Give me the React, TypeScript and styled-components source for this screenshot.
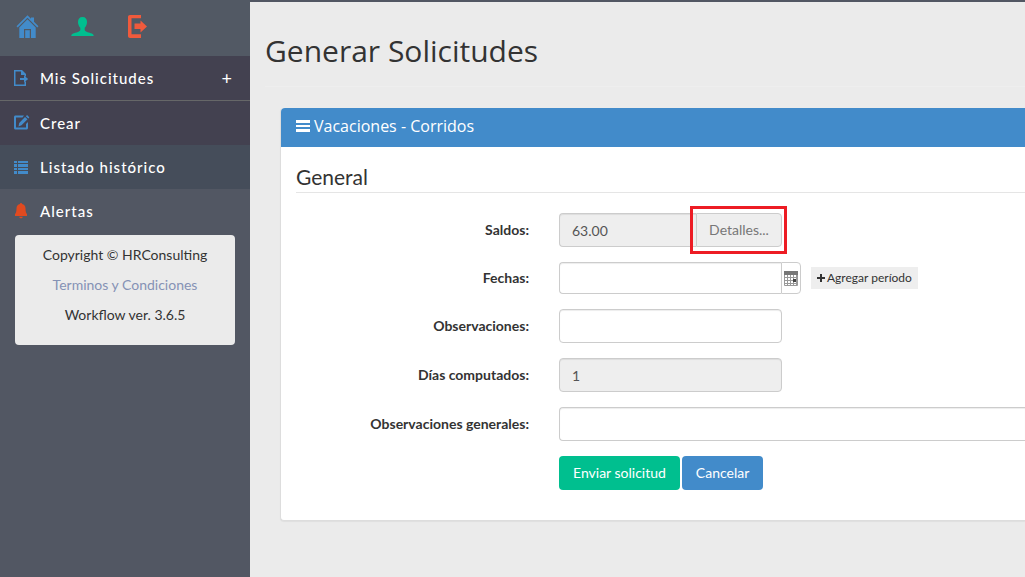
import React from "react";
import styled, { createGlobalStyle } from "styled-components";

const GlobalStyle = createGlobalStyle`
  *, *::before, *::after { box-sizing: border-box; }
  body {
    margin: 0;
    background: #ebebeb;
    color: #333;
    font: 14px/20px Lato, "Liberation Sans", sans-serif;
  }
  button, input { font: inherit; }
`;

const Page = styled.div`
  display: flex;
  min-height: 100vh;
  overflow-x: hidden;
`;

const Sidebar = styled.aside`
  flex: 0 0 250px;
  background: #525763;
`;

const Shortcuts = styled.nav`
  display: flex;
  gap: 31px;
  height: 56px;
  padding: 15px 16px;
  background: #525964;
`;

const Shortcut = styled.a<{ $color: string }>`
  width: 24px;
  height: 24px;
  color: ${(p) => p.$color};
`;

const Glyph = styled.svg`
  display: block;
  fill: currentColor;
`;

const Menu = styled.ul`
  list-style: none;
  margin: 0;
  padding: 0;
`;

const MenuItem = styled.li<{ $bg?: string; $line?: boolean }>`
  background: ${(p) => p.$bg ?? "transparent"};
  border-bottom: ${(p) => (p.$line ? "1px solid #666768" : "0")};
`;

const MenuLink = styled.a<{ $icon: string }>`
  display: flex;
  align-items: center;
  gap: 10px;
  height: 44px;
  padding: 0 17px 0 13px;
  color: #fff;
  font-size: 15px;
  font-weight: 500;
  line-height: 20px;
  letter-spacing: 1px;
  text-decoration: none;

  svg { color: ${(p) => p.$icon}; }
`;

const Expand = styled.span`
  margin-left: auto;
  font-size: 18px;
  font-weight: 400;
`;

const About = styled.section`
  height: 110px;
  margin: 2px 15px;
  padding: 5px 10px;
  border-radius: 4px;
  background: #ebebeb;
  text-align: center;
`;

const AboutLine = styled.p`
  margin: 0;
  line-height: 30px;

  a { color: #8592b5; text-decoration: none; }
`;

const Main = styled.main`
  flex: 1;
  min-width: 0;
  border-top: 2px solid #525763;
  padding-left: 15px;
`;

const Title = styled.h1`
  margin: 0 0 21px;
  padding: 28px 0 14px;
  border-bottom: 1px solid #eee;
  font: 400 30px/42px "Open Sans", "Noto Sans", sans-serif;
`;

const Panel = styled.section`
  margin-left: 15px;
  border: 1px solid #ddd;
  border-width: 0 0 1px 1px;
  border-radius: 4px 0 0 4px;
  background: #fff;
  box-shadow: 0 1px 1px rgba(0, 0, 0, 0.05);
`;

const PanelTitle = styled.h2`
  display: flex;
  align-items: center;
  gap: 4px;
  height: 39px;
  margin: 0;
  padding: 0 15px 3px;
  border-radius: 4px 0 0 0;
  background: #428bca;
  color: #fff;
  font: 500 16px/24px "Open Sans", "Noto Sans", sans-serif;
`;

const Form = styled.form`
  display: flex;
  flex-direction: column;
  gap: 15px;
  padding: 15px 0 30px 15px;
`;

const Legend = styled.h3`
  margin: 0 0 5px;
  border-bottom: 1px solid #e5e5e5;
  font-size: 21px;
  font-weight: 400;
  line-height: 30px;
`;

const Row = styled.div`
  display: grid;
  grid-template-columns: 233px minmax(0, 1fr);
  column-gap: 30px;
  align-items: center;
`;

const Label = styled.label`
  font-weight: 700;
  text-align: right;
`;

const Field = styled.div`
  display: flex;
  align-items: center;
`;

const TextInput = styled.input<{ $width?: string; $joined?: boolean; $bleed?: boolean; $short?: boolean }>`
  width: ${(p) => p.$width ?? "100%"};
  height: ${(p) => (p.$short ? "32px" : "34px")};
  padding: 6px 12px;
  border: 1px solid #ccc;
  border-right-width: ${(p) => (p.$joined || p.$bleed ? "0" : "1px")};
  border-radius: ${(p) => (p.$joined || p.$bleed ? "4px 0 0 4px" : "4px")};
  background: #fff;
  box-shadow: inset 0 1px 1px rgba(0, 0, 0, 0.075);
  color: #555;

  &:read-only { background: #eee; }
`;

const Highlight = styled.span`
  position: relative;
  display: flex;

  &::after {
    content: "";
    position: absolute;
    inset: -7px -5px -7px -6px;
    border: 3px solid #ed1c24;
    pointer-events: none;
  }
`;

const DetailsButton = styled.button`
  width: 86px;
  height: 34px;
  padding: 0;
  border: 1px solid #ccc;
  border-radius: 0 4px 4px 0;
  background: #eee;
  color: #777;
`;

const CalendarButton = styled.button`
  display: grid;
  place-items: center;
  width: 20px;
  height: 32px;
  padding: 0;
  border: 1px solid #ccc;
  border-radius: 0 4px 4px 0;
  background: #fff;
  color: #777;
`;

const AddButton = styled.button`
  display: flex;
  align-items: center;
  gap: 2px;
  height: 22px;
  margin-left: 10px;
  padding: 0 6px;
  border: 0;
  background: #eee;
  color: #333;
  font-size: 12px;
`;

const Actions = styled.div`
  display: flex;
  gap: 2px;
  padding-left: 263px;
`;

const ActionButton = styled.button<{ $color: string }>`
  height: 34px;
  padding: 0 14px;
  border: 0;
  border-radius: 4px;
  background: ${(p) => p.$color};
  color: #fff;
`;

const HomeIcon = () => (
  <Glyph width="24" height="24" viewBox="0 0 24 24" aria-hidden="true">
    <path d="M11.500.300.5 11.300l1.200 1.200 9.800-9.800 9.800 9.800 1.200-1.200L18 6.800V2.500h-3v1.300Z" />
    <path d="M11.500 4.200 3.300 12.400V23H8v-9h7v9h4.700V12.400Z" />
    <path d="M9.200 15.200h4.600V23H9.200Z" />
  </Glyph>
);

const UserIcon = () => (
  <Glyph width="24" height="24" viewBox="0 0 24 24" aria-hidden="true">
    <path d="M11.500 2C8.500 2 7 4 7 7c0 2.500 1 4.500 2.300 5.700v2.100c0 1.200-1 1.700-2.300 2.200-4 1.300-6.700 1.500-6.700 4h22.400c0-2.500-2.700-2.700-6.700-4-1.300-.5-2.300-1-2.300-2.200v-2.100C15 11.500 16 9.500 16 7c0-3-1.500-5-4.500-5Z" />
  </Glyph>
);

const ExitIcon = () => (
  <Glyph width="24" height="24" viewBox="0 0 24 24" aria-hidden="true">
    <path d="M4 0h11v3.300H5.500v16H15V23H4c-1.200 0-2-.8-2-2V2C2 .8 2.800 0 4 0Z" />
    <path d="M8.500 8.500h6V5.500l6.500 6-6.500 6v-3.500h-6Z" />
  </Glyph>
);

const FileOutIcon = () => (
  <Glyph width="17" height="18" viewBox="0 0 17 18" aria-hidden="true">
    <path d="M1 1h8l4 4v2.500h-1.500V6H8V2.500H2.500v13h9V12.500H13V17H1Z" />
    <path d="M7 9h4V6.500l4.200 3.500-4.200 3.500V11H7Z" />
  </Glyph>
);

const EditIcon = () => (
  <Glyph width="17" height="18" viewBox="0 0 17 18" aria-hidden="true">
    <path d="M2.500 1.500H11L9.500 3.500H3v10h10V10l2-2v6c0 .9-.6 1.500-1.500 1.500H2.500C1.600 15.500 1 14.900 1 14V3c0-.9.6-1.500 1.500-1.500Z" />
    <path d="m12 3 2.500 2.300-6 6L5.500 12.500l.7-3.500Zm.8-.8.8-.7c.3-.3.700-.3 1 0L16 2.900c.3.300.3.700 0 1l-.8.7Z" />
  </Glyph>
);

const ListIcon = () => (
  <Glyph width="17" height="18" viewBox="0 0 17 18" aria-hidden="true">
    <path d="M1 3h3v2H1Zm4 0h10v2H5ZM1 6h3v3H1Zm4 0h10v3H5ZM1 10h3v2H1Zm4 0h10v2H5ZM1 13h3v3H1Zm4 0h10v3H5Z" />
  </Glyph>
);

const BellIcon = () => (
  <Glyph width="17" height="18" viewBox="0 0 17 18" aria-hidden="true">
    <path d="M7 2c0-1.300 2-1.300 2 0 2.200.4 3.500 2 3.500 4.500 0 3 .6 4.500 1.500 5.500v2H2v-2c.9-1 1.500-2.500 1.500-5.500C3.500 4 4.800 2.400 7 2Zm-.7 12.700h3.400c0 2-3.400 2-3.400 0Z" />
  </Glyph>
);

const BarsIcon = () => (
  <Glyph width="14" height="14" viewBox="0 0 14 14" aria-hidden="true">
    <path d="M0 1h14v3H0Zm0 5h14v2H0Zm0 4h14v3H0Z" />
  </Glyph>
);

const CalendarIcon = () => (
  <Glyph width="14" height="15" viewBox="0 0 14 15" aria-hidden="true">
    <path d="M0 0h14v4H0Z" />
    <path
      fill="none"
      stroke="#999"
      d="M.5 4v10.500h13V4M3.500 4v11M6.500 4v11M9.500 4v11M12.500 4v11M0 6.500h14M0 9.500h14M0 12.500h14"
    />
    <path fill="#444" d="M9 8h3v3H9Z" />
  </Glyph>
);

const PlusIcon = () => (
  <Glyph width="8" height="8" viewBox="0 0 8 8" aria-hidden="true">
    <path d="M3 0h2v3h3v2H5v3H3V5H0V3h3Z" />
  </Glyph>
);

export default function App() {
  return (
    <Page>
      <GlobalStyle />
      <Sidebar>
        <Shortcuts>
          <Shortcut href="#inicio" $color="#428bca" aria-label="Inicio"><HomeIcon /></Shortcut>
          <Shortcut href="#perfil" $color="#00bf8f" aria-label="Perfil"><UserIcon /></Shortcut>
          <Shortcut href="#salir" $color="#f05a3c" aria-label="Salir"><ExitIcon /></Shortcut>
        </Shortcuts>
        <Menu>
          <MenuItem $bg="#434150" $line>
            <MenuLink href="#solicitudes" $icon="#428bca"><FileOutIcon />Mis Solicitudes<Expand>+</Expand></MenuLink>
          </MenuItem>
          <MenuItem $bg="#434150">
            <MenuLink href="#crear" $icon="#428bca"><EditIcon />Crear</MenuLink>
          </MenuItem>
          <MenuItem $bg="#454d5a">
            <MenuLink href="#listado" $icon="#428bca"><ListIcon />Listado histórico</MenuLink>
          </MenuItem>
          <MenuItem>
            <MenuLink href="#alertas" $icon="#e04a20"><BellIcon />Alertas</MenuLink>
          </MenuItem>
        </Menu>
        <About>
          <AboutLine>Copyright © HRConsulting</AboutLine>
          <AboutLine><a href="#terminos">Terminos y Condiciones</a></AboutLine>
          <AboutLine>Workflow ver. 3.6.5</AboutLine>
        </About>
      </Sidebar>
      <Main>
        <Title>Generar Solicitudes</Title>
        <Panel>
          <PanelTitle><BarsIcon />Vacaciones - Corridos</PanelTitle>
          <Form onSubmit={(e: React.FormEvent) => e.preventDefault()}>
            <Legend>General</Legend>
            <Row>
              <Label htmlFor="saldos">Saldos:</Label>
              <Field>
                <TextInput id="saldos" $width="137px" $joined readOnly defaultValue="63.00" />
                <Highlight><DetailsButton type="button">Detalles...</DetailsButton></Highlight>
              </Field>
            </Row>
            <Row>
              <Label htmlFor="fechas">Fechas:</Label>
              <Field>
                <TextInput id="fechas" $width="222px" $joined $short />
                <CalendarButton type="button" aria-label="Calendario"><CalendarIcon /></CalendarButton>
                <AddButton type="button"><PlusIcon />Agregar período</AddButton>
              </Field>
            </Row>
            <Row>
              <Label htmlFor="observaciones">Observaciones:</Label>
              <Field><TextInput id="observaciones" $width="223px" /></Field>
            </Row>
            <Row>
              <Label htmlFor="dias">Días computados:</Label>
              <Field><TextInput id="dias" $width="223px" readOnly defaultValue="1" /></Field>
            </Row>
            <Row>
              <Label htmlFor="generales">Observaciones generales:</Label>
              <Field><TextInput id="generales" $bleed /></Field>
            </Row>
            <Actions>
              <ActionButton type="submit" $color="#00bf8f">Enviar solicitud</ActionButton>
              <ActionButton type="button" $color="#428bca">Cancelar</ActionButton>
            </Actions>
          </Form>
        </Panel>
      </Main>
    </Page>
  );
}
